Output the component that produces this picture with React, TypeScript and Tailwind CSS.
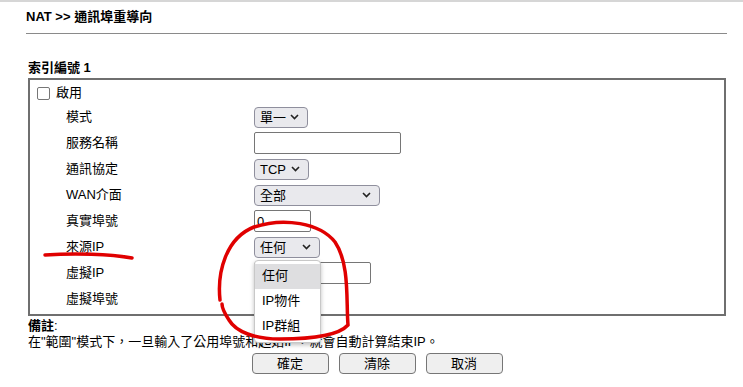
import React from "react";

const font = {
  fontFamily: '"Liberation Sans", "Noto Sans CJK TC", sans-serif',
};

function Chevron() {
  return (
    <svg width="9" height="6" viewBox="0 0 9 6" className="shrink-0">
      <path d="M1 1 L4.5 4.5 L8 1" fill="none" stroke="#222" strokeWidth="1.6" />
    </svg>
  );
}

function Select({ value, width }: { value: string; width: string }) {
  return (
    <div
      className={`${width} h-[21px] flex items-center justify-between pl-[5px] pr-[8px] rounded-[4px] border border-[#8f8f9d] bg-[#e9e9ed] text-[13px] leading-none text-black`}
    >
      <span>{value}</span>
      <Chevron />
    </div>
  );
}

function Input({ value, width }: { value?: string; width: string }) {
  return (
    <div
      className={`${width} h-[22px] flex items-center pl-[2px] rounded-[2px] border border-[#767676] bg-white text-[13px] leading-none text-black`}
    >
      {value}
    </div>
  );
}

export default function App() {
  const rows: { label: string; control: React.ReactNode }[] = [
    { label: "模式", control: <Select value="單一" width="w-[54px]" /> },
    { label: "服務名稱", control: <Input width="w-[147px]" /> },
    { label: "通訊協定", control: <Select value="TCP" width="w-[55px]" /> },
    { label: "WAN介面", control: <Select value="全部" width="w-[126px]" /> },
    { label: "真實埠號", control: <Input value="0" width="w-[57px]" /> },
    {
      label: "來源IP",
      control: (
        <div className="relative">
          <Select value="任何" width="w-[66px]" />
          {/* open dropdown list */}
          <div className="absolute left-0 top-[23px] z-10 w-[67px] rounded-[4px] border border-[#c8c8c8] bg-white py-[3px] shadow-[0_2px_4px_rgba(0,0,0,0.25)] text-[13px] text-black">
            <div className="h-[25px] flex items-center pl-[7px] bg-[#dedee0]">任何</div>
            <div className="h-[25px] flex items-center pl-[7px]">IP物件</div>
            <div className="h-[25px] flex items-center pl-[7px]">IP群組</div>
          </div>
        </div>
      ),
    },
    { label: "虛擬IP", control: <Input width="w-[117px]" /> },
    { label: "虛擬埠號", control: <Input width="w-[57px]" /> },
  ];

  return (
    <div
      className="relative w-[743px] h-[387px] overflow-hidden bg-white border-t-2 border-[#d6d6d6] text-black"
      style={font}
    >
      <div className="pl-[26px] w-[727px]">
        <div className="pt-[7px] text-[13px] leading-[16px] font-bold">NAT &gt;&gt; 通訊埠重導向</div>
        <div className="mt-[8px] h-px bg-[#8a8a8a]" />

        <div className="mt-[26px] pl-[2px] text-[13px] leading-[16px] font-bold">索引編號 1</div>

        <div className="mt-[2px] ml-[2px] w-[698px] border-2 border-[#6f6f6f] pb-[2px]">
          <div className="h-[24px] flex items-center pl-[7px] pt-[2px] text-[13px]">
            <div className="w-[13px] h-[13px] rounded-[2px] border border-[#767676] bg-white" />
            <span className="ml-[6px]">啟用</span>
          </div>
          {rows.map((r) => (
            <div key={r.label} className="h-[26px] grid grid-cols-[188px_1fr] items-center pl-[36px] text-[13px]">
              <span>{r.label}</span>
              <div>{r.control}</div>
            </div>
          ))}
        </div>

        <div className="pl-[2px] text-[13px] leading-[16px]">
          <div className="mt-[2px]">
            <b>備註</b>:
          </div>
          <div>在"範圍"模式下，一旦輸入了公用埠號和起始IP，就會自動計算結束IP。</div>
        </div>

        <div className="mt-[3px] ml-[2px] w-[698px] flex justify-center gap-[10px] text-[13px]">
          {["確定", "清除", "取消"].map((b) => (
            <div
              key={b}
              className="w-[77px] h-[21px] flex items-center justify-center rounded-[4px] border border-[#767676] bg-[#efefef]"
            >
              {b}
            </div>
          ))}
        </div>
      </div>

      {/* red hand-drawn annotations */}
      <svg
        className="absolute left-0 top-0 pointer-events-none z-20"
        width="743"
        height="387"
        viewBox="0 0 743 387"
      >
        <path
          d="M45 253 C 75 251, 110 252, 132 256"
          fill="none"
          stroke="#e00000"
          strokeWidth="3.5"
          strokeLinecap="round"
        />
        <path
          d="M220 298 C 217 270, 226 236, 254 225 C 284 215, 320 221, 335 240 C 350 262, 346 300, 348 323 C 338 334, 308 337, 280 337 C 255 337, 236 330, 229 318 C 225 312, 222 307, 222 302"
          fill="none"
          stroke="#e00000"
          strokeWidth="3.5"
          strokeLinecap="round"
        />
      </svg>
    </div>
  );
}
